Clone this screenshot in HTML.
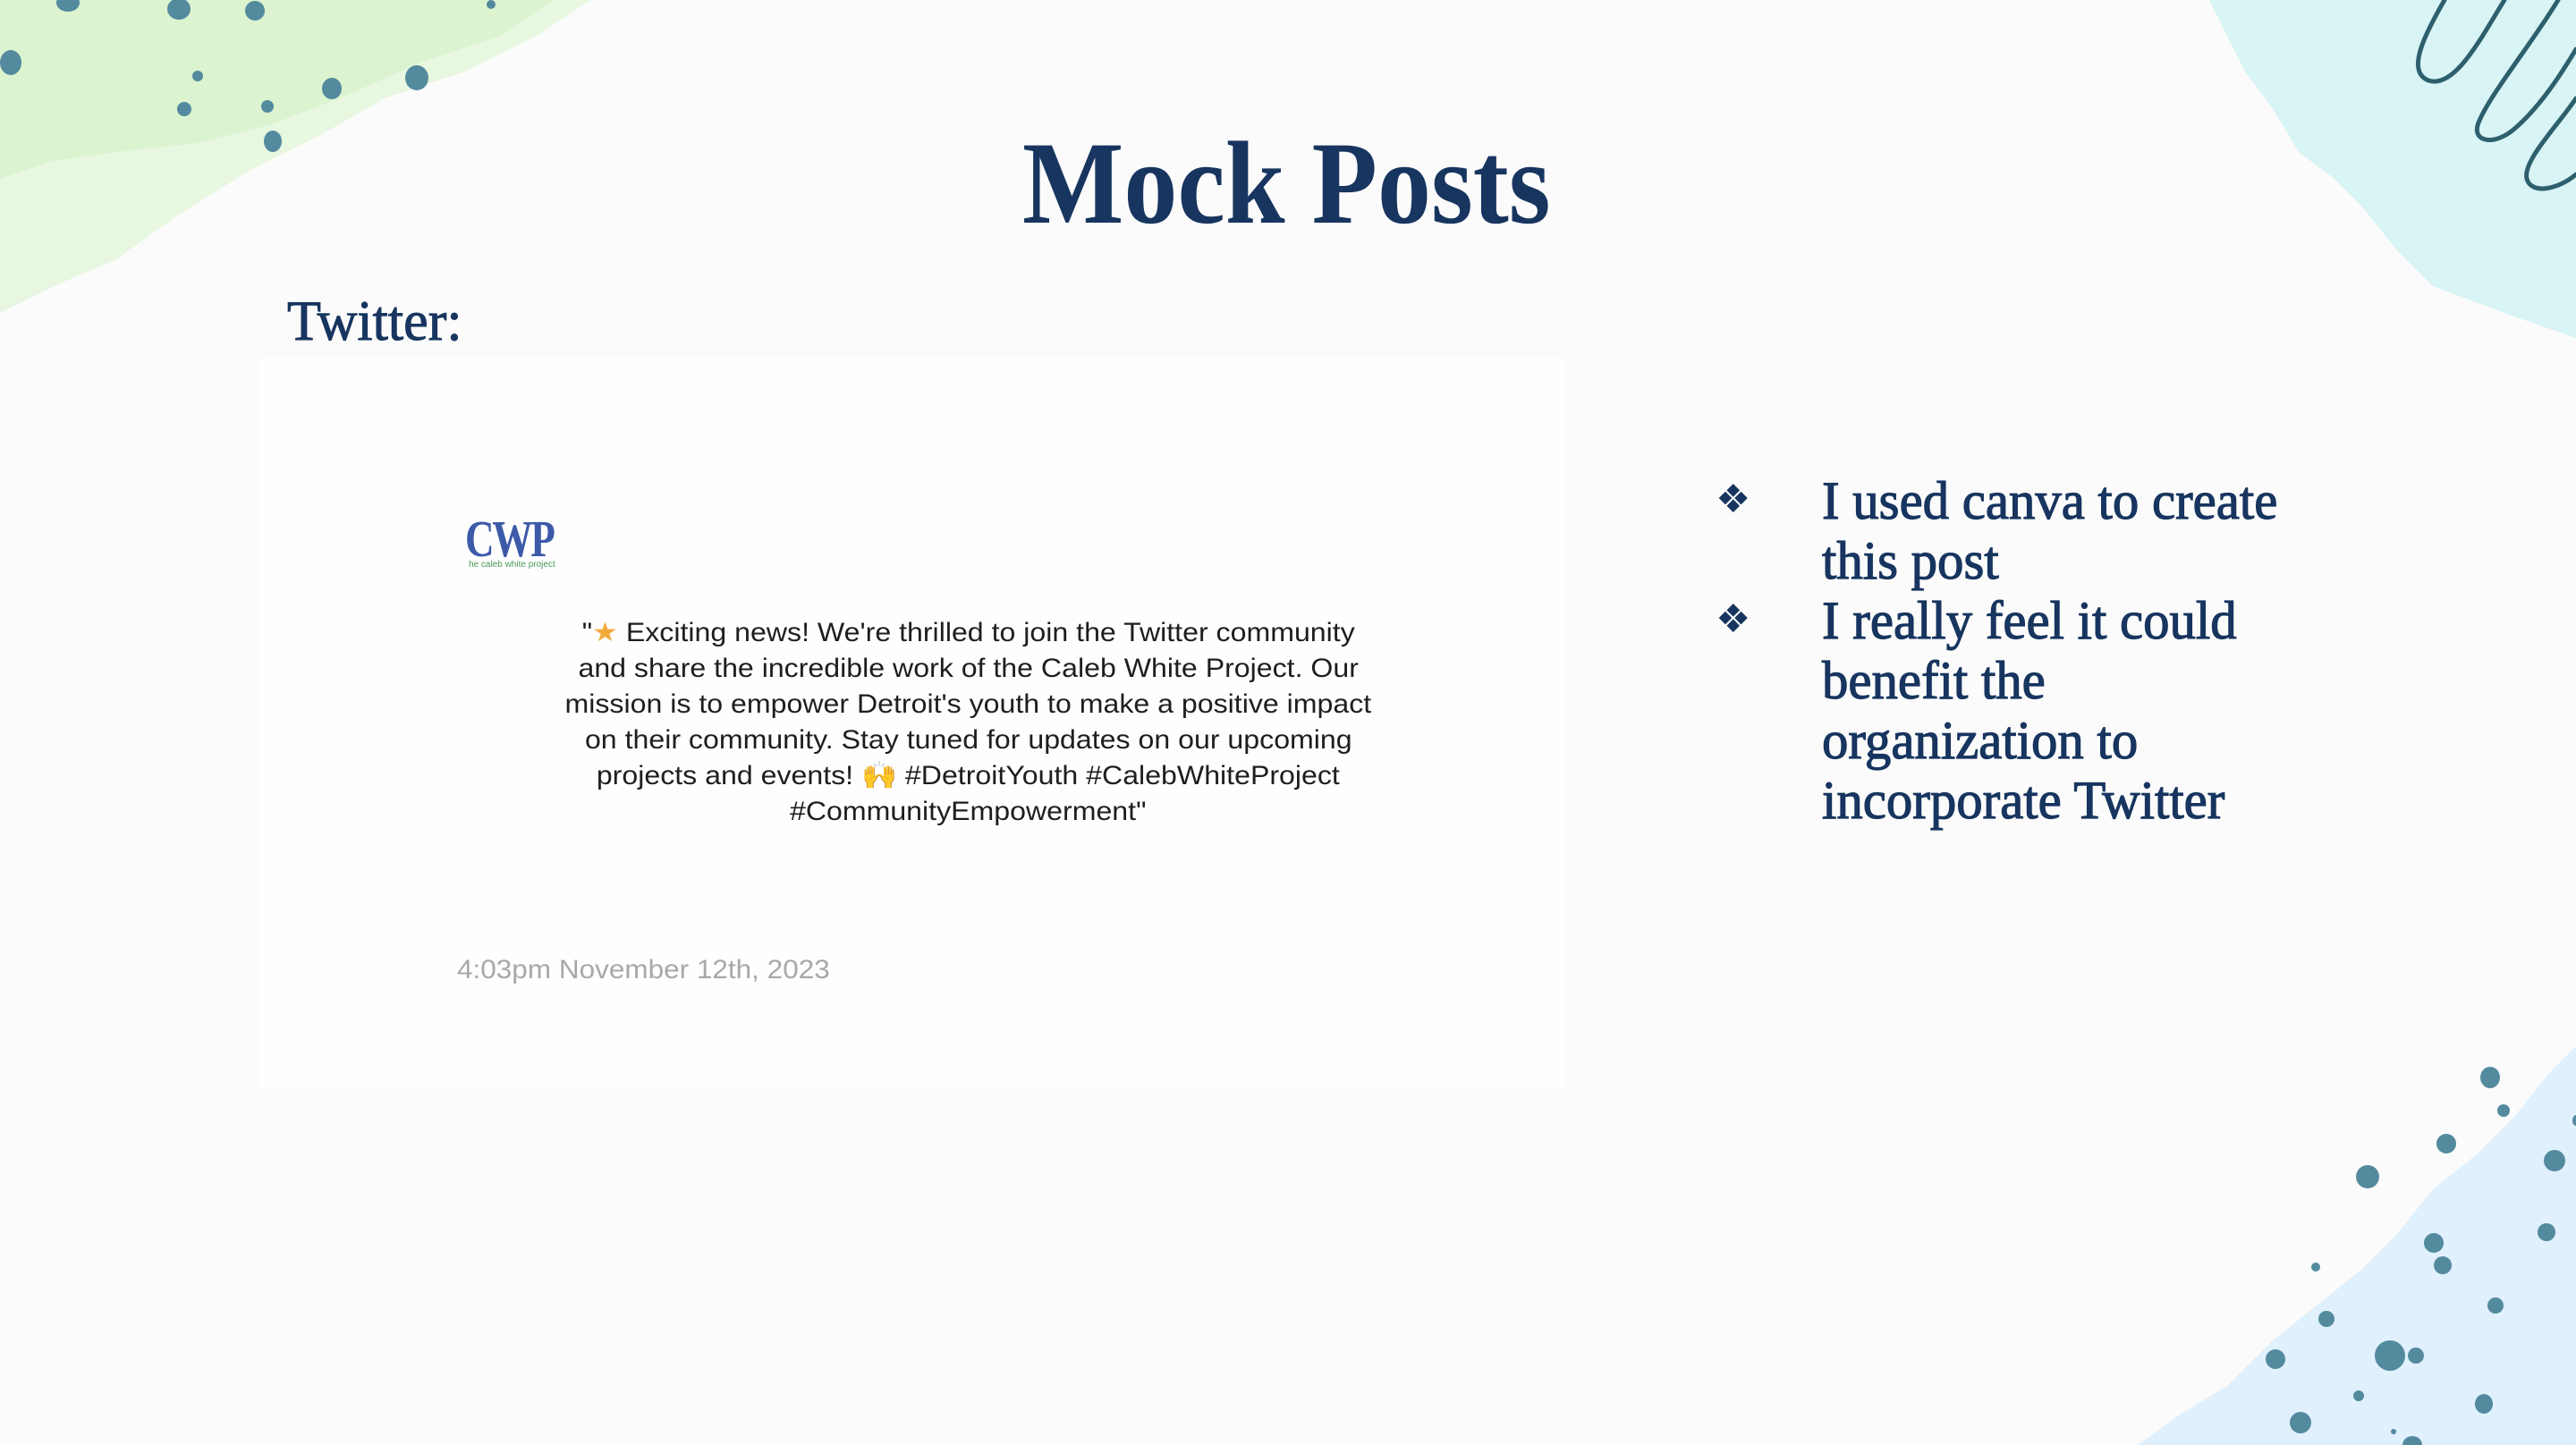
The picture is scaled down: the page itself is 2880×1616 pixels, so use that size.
<!DOCTYPE html>
<html><head><meta charset="utf-8"><style>
*{margin:0;padding:0;box-sizing:border-box}
body{width:2880px;height:1616px;overflow:hidden;background:#fbfbfb;position:relative;font-family:"Liberation Serif",serif}
svg.bg{position:absolute;left:0;top:0}
.t{position:absolute;color:#17355f;white-space:nowrap;transform-origin:left top}
.card{position:absolute;left:290px;top:400px;width:1460px;height:818px;background:#fefefe}
.tw{position:absolute;left:560px;top:688px;width:1045px;text-align:center;font-family:"Liberation Sans",sans-serif;font-size:30px;line-height:40px;color:#1e1e1e;white-space:nowrap}
.tw div{display:block}
.tw span.in{display:inline-block;transform:scaleX(1.07)}
.ts{position:absolute;left:511px;top:1068px;font-family:"Liberation Sans",sans-serif;font-size:30px;color:#a8a8a8;white-space:nowrap;transform:scaleX(1.05);transform-origin:left}
.bl{position:absolute;left:1918px;font-size:44px;color:#17355f}
.bt{position:absolute;left:2037px;font-size:60px;line-height:67px;color:#17355f;white-space:nowrap;-webkit-text-stroke:1.2px #17355f}
.bt div{transform:scaleX(0.98);transform-origin:left}
</style></head><body>
<svg class="bg" width="2880" height="1616" viewBox="0 0 2880 1616">
<path d="M0,0 L660,0 L600,40 L520,80 L430,110 L360,150 L280,190 L200,240 L130,290 L60,320 L0,350 Z" fill="#e8f7e0"/>
<path d="M0,0 L620,0 L560,40 L470,70 L380,110 L300,140 L220,160 L130,170 L60,180 L0,200 Z" fill="#dcf3d0"/>
<g fill="#538a9e">
<ellipse cx="76" cy="3" rx="13" ry="10"/><ellipse cx="200" cy="10" rx="13" ry="12"/><ellipse cx="285" cy="12" rx="11" ry="11"/>
<ellipse cx="12" cy="70" rx="12" ry="14"/><ellipse cx="221" cy="85" rx="6" ry="6"/><ellipse cx="206" cy="122" rx="8" ry="8"/>
<ellipse cx="299" cy="119" rx="7" ry="7"/><ellipse cx="371" cy="99" rx="11" ry="12"/><ellipse cx="466" cy="87" rx="13" ry="14"/>
<ellipse cx="305" cy="158" rx="10" ry="12"/><ellipse cx="549" cy="5" rx="5" ry="5"/>
</g>
<path d="M2470,0 L2880,0 L2880,378 L2800,350 L2720,320 L2680,280 L2640,230 L2610,200 L2570,170 L2540,120 L2510,80 L2490,40 Z" fill="#d8f4f5"/>
<g fill="none" stroke="#2e5f6d" stroke-width="5" stroke-linecap="round">
<path d="M2733,0 C2710,40 2690,80 2715,90 C2745,100 2775,40 2800,0"/>
<path d="M2860,0 C2830,50 2780,110 2770,140 C2765,160 2790,162 2810,145 C2840,120 2865,80 2880,55"/>
<path d="M2880,110 C2860,140 2820,180 2825,200 C2830,218 2860,212 2880,195"/>
</g>
<path d="M2880,1170 L2850,1200 L2810,1250 L2770,1290 L2720,1330 L2680,1380 L2640,1420 L2590,1460 L2540,1500 L2490,1550 L2440,1580 L2390,1616 L2880,1616 Z" fill="#e0f0fd"/>
<g fill="#538a9e">
<ellipse cx="2784" cy="1205" rx="11" ry="12"/><ellipse cx="2799" cy="1242" rx="7" ry="7"/><ellipse cx="2735" cy="1279" rx="11" ry="11"/>
<ellipse cx="2647" cy="1316" rx="13" ry="13"/><ellipse cx="2856" cy="1298" rx="12" ry="12"/><ellipse cx="2847" cy="1378" rx="10" ry="10"/>
<ellipse cx="2589" cy="1417" rx="5" ry="5"/><ellipse cx="2721" cy="1390" rx="11" ry="11"/><ellipse cx="2731" cy="1415" rx="10" ry="10"/>
<ellipse cx="2790" cy="1460" rx="9" ry="9"/><ellipse cx="2601" cy="1475" rx="9" ry="9"/><ellipse cx="2544" cy="1520" rx="11" ry="11"/>
<ellipse cx="2672" cy="1516" rx="17" ry="17"/><ellipse cx="2701" cy="1516" rx="9" ry="9"/><ellipse cx="2637" cy="1561" rx="6" ry="6"/>
<ellipse cx="2777" cy="1570" rx="10" ry="11"/><ellipse cx="2572" cy="1591" rx="12" ry="12"/><ellipse cx="2676" cy="1601" rx="3" ry="3"/>
<ellipse cx="2697" cy="1616" rx="11" ry="10"/><ellipse cx="2880" cy="1253" rx="4" ry="6"/>
</g>
</svg>
<div class="t" style="left:1143px;top:128px;font-size:132px;font-weight:bold;transform:scaleX(0.91)">Mock Posts</div>
<div class="t" style="left:321px;top:322px;font-size:64px;transform:scaleX(0.97);-webkit-text-stroke:1px #17355f">Twitter:</div>
<div class="card"></div>
<div style="position:absolute;left:520px;top:574px;width:106px;height:66px">
<div style="font-family:'Liberation Serif',serif;font-weight:bold;font-size:58px;line-height:58px;color:#3d5aa8;transform:scaleX(0.78);transform-origin:left;letter-spacing:-3px">CWP</div>
<div style="font-family:'Liberation Sans',sans-serif;font-size:10px;color:#4a9a5a;margin-left:4px;margin-top:-6px;white-space:nowrap">he caleb white project</div>
</div>
<div class="tw">
<div><span class="in">"<span style="color:#f3a93a">★</span> Exciting news! We're thrilled to join the Twitter community</span></div>
<div><span class="in">and share the incredible work of the Caleb White Project. Our</span></div>
<div><span class="in">mission is to empower Detroit's youth to make a positive impact</span></div>
<div><span class="in">on their community. Stay tuned for updates on our upcoming</span></div>
<div><span class="in">projects and events! <span style="color:#f2c04a">🙌</span> #DetroitYouth #CalebWhiteProject</span></div>
<div><span class="in">#CommunityEmpowerment"</span></div>
</div>
<div class="ts">4:03pm November 12th, 2023</div>
<div class="bl" style="top:533px">❖</div>
<div class="bl" style="top:667px">❖</div>
<div class="bt" style="top:527px">
<div>I used canva to create</div><div>this post</div>
<div>I really feel it could</div><div>benefit the</div><div>organization to</div><div>incorporate Twitter</div>
</div>
</body></html>
